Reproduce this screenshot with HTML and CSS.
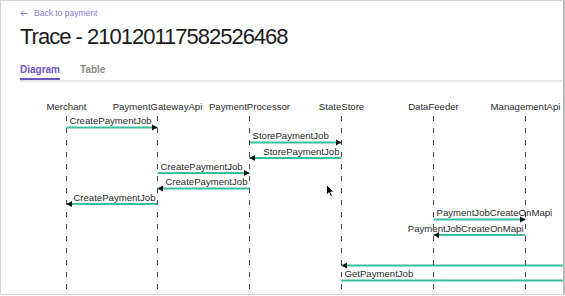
FILE: index.html
```html
<!DOCTYPE html>
<html lang="en">
<head>
    <meta charset="UTF-8">
    <meta name="viewport" content="width=device-width, initial-scale=1.0">
    <title>Trace - 210120117582526468</title>
    <link rel="stylesheet" href="styles.css">
</head>
<body>

    <div class="frame">
        <a class="back" href="#">
            <svg class="back-arrow" width="8" height="7" viewBox="0 0 8 7">
                <path d="M7.5 3.5H1 M3.8 0.7L1 3.5L3.8 6.3"/>
            </svg>
            Back to payment
        </a>
        <h1 class="title">Trace - 210120117582526468</h1>

        <nav class="tabs">
            <a class="tab active" href="#">Diagram</a>
            <a class="tab" href="#">Table</a>
        </nav>

        <div class="diagram">
            <svg class="seq" width="545" height="212" viewBox="0 0 545 212">
                <g class="actors">
                    <text x="46.5" y="27.5">Merchant</text>
                    <text x="137.5" y="27.5">PaymentGatewayApi</text>
                    <text x="229.5" y="27.5">PaymentProcessor</text>
                    <text x="321.5" y="27.5">StateStore</text>
                    <text x="413.5" y="27.5">DataFeeder</text>
                    <text x="505.5" y="27.5">ManagementApi</text>
                </g>

                <!-- messages -->
                <g class="messages">
                    <line x1="46.5" y1="45.5" x2="137.5" y2="45.5"/>
                    <line x1="229.5" y1="60.5" x2="321.5" y2="60.5"/>
                    <line x1="321.5" y1="76" x2="229.5" y2="76"/>
                    <line x1="137.5" y1="91" x2="229.5" y2="91"/>
                    <line x1="229.5" y1="106.5" x2="137.5" y2="106.5"/>
                    <line x1="137.5" y1="122" x2="46.5" y2="122"/>
                    <line x1="413.5" y1="137.5" x2="505.5" y2="137.5"/>
                    <line x1="505.5" y1="153" x2="413.5" y2="153"/>
                    <line x1="560" y1="183.5" x2="321.5" y2="183.5"/>
                    <line x1="321.5" y1="198.5" x2="560" y2="198.5"/>
                </g>
                <g class="heads">
                    <path d="M132 42.5L137.5 45.5L132 48.5Z"/>
                    <path d="M316 57.5L321.5 60.5L316 63.5Z"/>
                    <path d="M235 73L229.5 76L235 79Z"/>
                    <path d="M224 88L229.5 91L224 94Z"/>
                    <path d="M143 103.5L137.5 106.5L143 109.5Z"/>
                    <path d="M52 119L46.5 122L52 125Z"/>
                    <path d="M500 134.5L505.5 137.5L500 140.5Z"/>
                    <path d="M419 150L413.5 153L419 156Z"/>
                    <path d="M327 180.5L321.5 183.5L327 186.5Z"/>
                </g>
                <g class="labels">
                    <text x="49.5" y="42">CreatePaymentJob</text>
                    <text x="232.5" y="57">StorePaymentJob</text>
                    <text class="end" x="319.5" y="72.5">StorePaymentJob</text>
                    <text x="140.5" y="87.5">CreatePaymentJob</text>
                    <text class="end" x="227.5" y="103">CreatePaymentJob</text>
                    <text class="end" x="135.5" y="118.5">CreatePaymentJob</text>
                    <text x="416.5" y="134">PaymentJobCreateOnMapi</text>
                    <text class="end" x="503.5" y="149.5">PaymentJobCreateOnMapi</text>
                    <text x="324.5" y="195">GetPaymentJob</text>
                </g>

                <g class="lifelines">
                    <line x1="46.5" y1="34" x2="46.5" y2="212"/>
                    <line x1="137.5" y1="34" x2="137.5" y2="212"/>
                    <line x1="229.5" y1="34" x2="229.5" y2="212"/>
                    <line x1="321.5" y1="34" x2="321.5" y2="212"/>
                    <line x1="413.5" y1="34" x2="413.5" y2="212"/>
                    <line x1="505.5" y1="34" x2="505.5" y2="212"/>
                </g>
            </svg>
        </div>

        <svg class="cursor" width="9" height="14" viewBox="0 0 9 14">
            <path d="M0.5 0.5V11L3 8.6L4.8 12.8L6.4 12.1L4.6 8H8Z"/>
        </svg>
    </div>

</body>
</html>
```

FILE: styles.css
```css
body {
    margin: 0;
    font-family: 'Liberation Sans', Arial, sans-serif;
    background: #fff;
}
.frame {
    position: relative;
    box-sizing: border-box;
    width: 565px;
    height: 295px;
    padding: 6px 0 0 19px;
    border: 1px solid #d6d6d6;
    border-right: 2px solid #bdbdbd;
    overflow: hidden;
}
.back {
    display: flex;
    align-items: center;
    gap: 6px;
    height: 12px;
    font-size: 8.5px;
    color: #8a7bd1;
    text-decoration: none;
}
.back-arrow path {
    fill: none;
    stroke: #8a7bd1;
    stroke-width: 1;
}
.title {
    margin: 5px 0 0;
    font-size: 22px;
    line-height: 26px;
    font-weight: normal;
    letter-spacing: -1px;
    color: #1b1b1b;
}
.tabs {
    display: flex;
    gap: 20px;
    margin-top: 13px;
    border-bottom: 2px solid #e8e8e8;
}
.tab {
    padding-bottom: 1px;
    font-size: 10px;
    line-height: 14px;
    font-weight: bold;
    color: #8a8a8a;
    text-decoration: none;
    border-bottom: 2px solid transparent;
}
.tab.active {
    color: #6b55c4;
    border-bottom-color: #6b55c4;
}
.diagram {
    height: 212px;
}
.seq {
    display: block;
    overflow: hidden;
}
.seq text {
    font-family: 'Liberation Sans', Arial, sans-serif;
    font-size: 9.6px;
    fill: #2b2b2b;
}
.actors text {
    text-anchor: middle;
}
.labels text.end {
    text-anchor: end;
}
.messages line {
    stroke: #3bbd9e;
    stroke-width: 2;
}
.heads path {
    fill: #111;
}
.lifelines line {
    stroke: #4a4a4a;
    stroke-width: 1;
    stroke-dasharray: 5 7;
}
.cursor {
    position: absolute;
    left: 325px;
    top: 183px;
}
.cursor path {
    fill: #000;
    stroke: #fff;
    stroke-width: 0.8;
}
```
